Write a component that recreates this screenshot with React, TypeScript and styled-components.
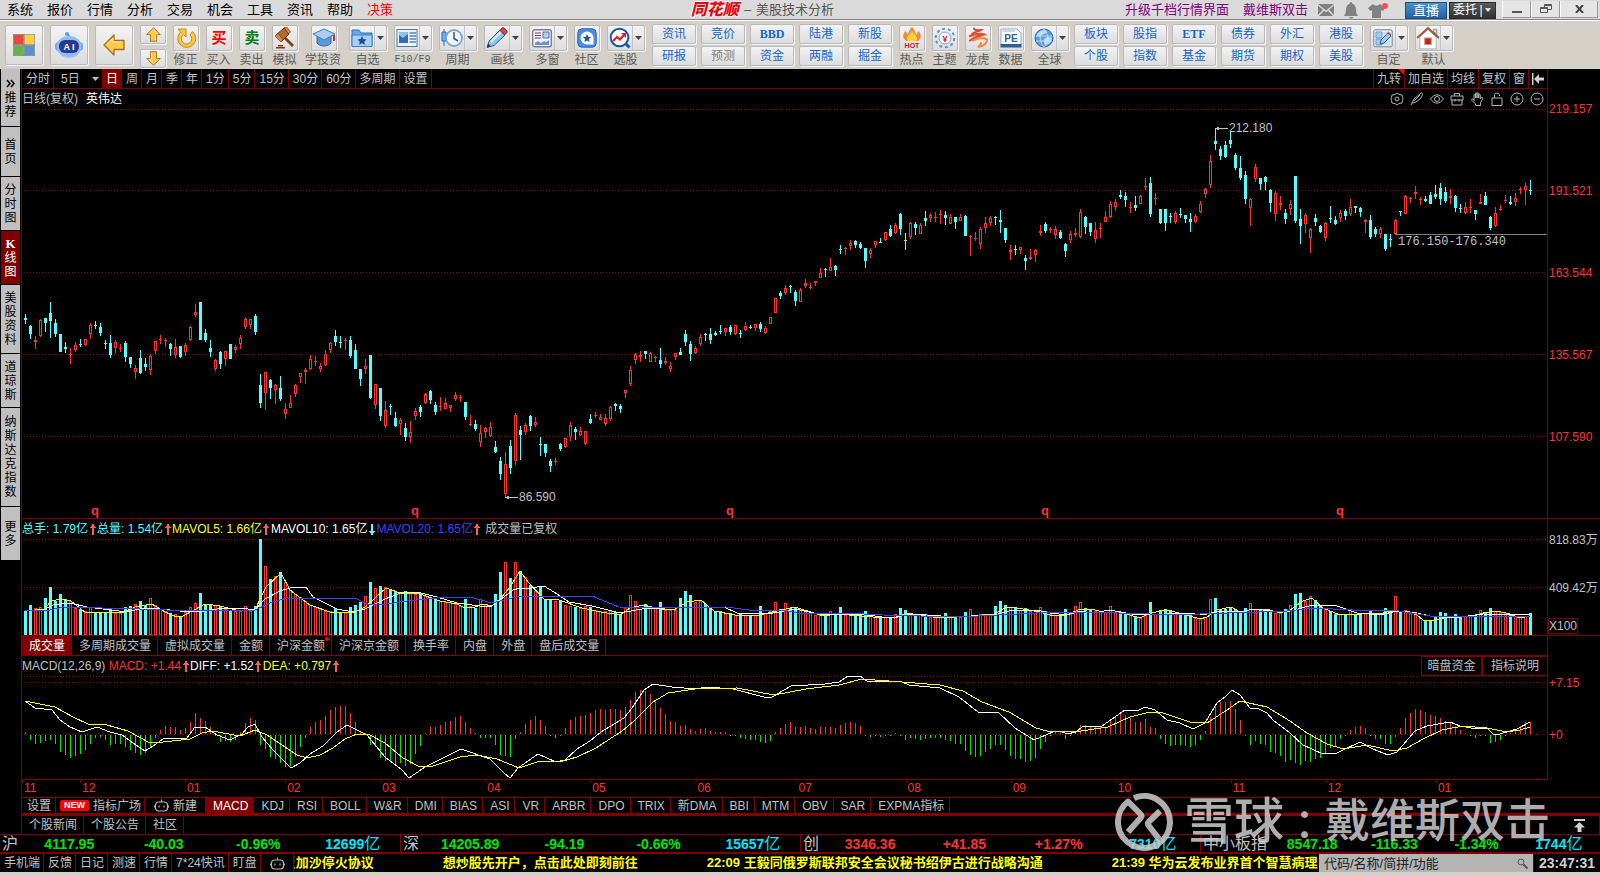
import React from "react";
import styled, { createGlobalStyle, css } from "styled-components";

/* ---------- palette ---------- */
const LINE = "#800000";
const RED = "#ff3232";
const CYAN = "#54ffff";
const SILVER = "#c0c0c0";
const YELLOW = "#ffff00";
const SANS = '"Liberation Sans", "Noto Sans CJK SC", sans-serif';

const GlobalStyle = createGlobalStyle`
  *, *::before, *::after { box-sizing: border-box; }
  body { margin: 0; background: #000; font: 12px/16px ${SANS}; color: ${SILVER}; }
  button, input { font: inherit; color: inherit; margin: 0; padding: 0; border: 0; background: none; border-radius: 0; }
  button { white-space: nowrap; cursor: pointer; }
  svg { display: block; flex: none; }
`;

/* ---------- market data ---------- */
/* One candle per token: direction, then high, body top, body bottom and low on the panel's own scale. */
const CANDLES = `
c314,318,320,324 c325,326,334,339 r336,340,342,349 r319,320,336,337 c318,318,323,332 c302,313,321,338 c319,323,334,337
c334,334,352,352 c342,347,349,353 r348,354,355,364 r342,345,350,352 c339,344,345,347 r339,339,345,346 r323,325,334,339
c321,325,326,329 c323,327,333,336 c340,343,344,349 c335,343,355,358 r340,342,348,353 r344,348,349,352 c341,343,357,362
c357,357,364,368 r365,368,372,379 c350,358,373,374 c358,364,367,371 r354,356,370,375 r341,341,351,354 r335,339,340,344
r338,340,341,347 c343,344,349,356 r339,347,355,358 c346,346,357,358 r343,345,352,356 r326,327,340,341 r304,312,315,317
c302,302,340,340 c329,333,340,342 c340,348,352,357 r359,360,369,371 c351,352,364,369 r351,351,359,366 c344,344,359,359
r345,347,350,353 r335,338,344,349 r317,319,327,329 r319,319,325,329 c314,316,332,335 c374,385,403,408 r372,372,393,410
c379,380,388,399 r384,385,390,404 c376,388,399,401 r403,409,414,419 r395,403,408,408 r384,385,394,397 r373,373,377,383
r368,370,372,384 r355,359,369,370 r356,361,362,366 r363,366,369,372 r350,354,365,366 r342,343,350,353 c330,336,342,346
c336,342,343,348 r338,340,341,350 c336,340,356,358 c344,350,369,369 c369,369,379,386 r359,366,369,374 c355,355,398,399
r384,384,405,409 c388,388,416,421 r401,410,426,428 c404,406,407,415 c412,418,426,427 r418,420,424,435 c423,428,437,441
r421,432,437,443 r408,411,416,420 c405,407,412,417 r393,394,403,404 c390,391,400,404 c402,405,412,415 r397,406,407,411
r398,403,409,409 r405,405,408,412 r392,395,399,401 r395,397,398,402 c402,402,417,420 r415,424,425,426 c420,424,429,431
r425,433,442,447 r427,428,432,438 r422,427,436,437 c441,447,452,453 c457,461,474,480 r452,464,494,497 c440,446,468,474
r413,415,461,465 c426,430,435,460 r423,425,432,435 c415,416,426,431 r417,422,425,427 c437,444,445,456 c444,444,453,457
c459,461,466,472 r458,461,462,465 c443,444,449,451 r438,438,447,448 r422,425,437,441 c427,429,432,440 r427,431,435,436
r431,431,444,445 c414,419,423,424 r412,415,416,418 r414,417,420,420 r414,418,424,426 r406,407,419,421 c403,404,406,411
c404,406,409,413 r390,390,393,398 r366,370,384,386 r353,354,360,364 r351,355,357,362 c351,351,354,359 r352,353,362,362
r356,357,358,362 c348,360,364,368 r357,361,363,365 r362,366,369,372 r353,353,357,360 c348,352,355,355 c330,334,342,346
c341,344,354,361 r346,348,353,354 r334,337,344,346 c333,334,335,341 c328,334,340,344 c331,333,335,336 c325,331,332,334
r328,328,332,336 c325,327,332,335 r325,325,334,335 c330,333,334,338 r322,326,330,331 c325,327,328,329 r324,324,328,331
c322,324,329,332 r326,328,333,334 r317,317,324,324 r298,298,313,313 c291,293,296,299 r285,288,293,295 c285,286,287,293
c290,292,301,306 r288,290,302,302 r279,283,286,288 r283,287,288,289 r281,281,283,286 r268,273,278,278 c268,269,270,277
r258,267,271,271 c265,266,270,276 c245,249,250,254 r247,248,249,255 r240,243,246,250 c240,241,245,248 c242,244,248,249
c248,248,261,268 r248,250,254,258 r241,241,245,248 c238,242,243,243 r232,232,240,241 c225,229,236,237 r223,225,233,234
c213,214,229,235 c233,240,241,250 r222,223,237,239 c222,224,228,235 r223,225,234,234 c211,218,221,226 r213,215,218,222
r212,217,218,222 r210,214,215,224 c211,215,218,225 r214,217,224,224 c217,217,222,229 r214,217,221,221 c215,216,236,236
r235,236,237,256 r232,238,239,241 r227,229,244,249 r217,223,228,233 r216,218,223,226 c216,217,218,225 c210,220,222,233
c228,228,240,243 r245,250,252,260 c245,249,250,255 r247,247,250,254 c255,258,261,270 r249,257,259,260 r249,250,255,262
r225,231,233,236 c222,224,231,233 r227,229,230,233 r226,229,235,239 c230,232,238,239 c243,244,251,257 r231,234,240,243
r228,233,235,237 r209,212,237,238 c216,217,227,234 c223,223,232,236 r222,230,239,243 r223,228,229,238 r211,217,222,222
r201,204,217,218 r199,202,207,211 c190,195,197,199 c192,196,200,207 r202,207,208,213 c196,205,208,211 r195,196,204,204
r178,186,187,190 c177,183,214,217 r193,198,199,205 c209,209,223,224 c209,209,223,231 c213,216,217,223 r211,213,222,224
c208,214,215,218 c215,215,219,223 c213,219,222,232 r214,216,222,223 r201,204,212,213 r188,189,194,198 r155,161,185,188
c129,141,144,150 c146,149,156,160 c141,145,157,158 c132,140,144,148 c153,155,168,170 c156,168,178,180 c171,175,199,204
r198,199,208,226 r164,167,179,182 c178,178,184,190 c176,177,182,190 c189,190,203,212 r191,193,214,221 r196,203,205,210
c209,213,219,224 r200,204,209,215 c176,176,221,223 c209,219,226,244 r213,215,224,233 r228,229,238,253 c214,218,222,226
c225,226,232,233 r222,223,238,241 c206,218,219,223 c216,220,224,225 r210,213,218,222 c209,211,216,220 r199,207,214,216
c206,206,208,213 c207,208,212,217 r219,220,222,233 c215,220,237,239 c227,229,234,237 r227,229,234,238 c234,234,249,251
c234,239,240,247 r219,220,234,235 c211,211,212,216 r195,196,214,214 r197,198,199,203 r186,192,194,199 r197,199,200,205
c196,199,201,202 c192,195,204,204 c185,194,197,199 c183,188,199,205 c187,192,201,203 r189,196,198,204 c195,196,208,212
c204,208,209,213 r202,207,213,214 r199,207,208,213 c210,210,214,220 r194,202,204,204 c192,196,205,205 c216,217,228,230
r207,213,226,227 r205,209,210,211 r195,200,201,203 c196,202,204,205 r193,198,202,206 r187,189,190,194 r183,186,190,205
c180,190,191,195`
  .trim()
  .split(/\s+/)
  .map((t) => {
    const [high, top, bottom, low] = t.slice(1).split(",").map(Number);
    return { up: t[0] === "r", high, top, bottom, low };
  });

const VOLUMES = [
  24, 30, 27, 28, 37, 48, 34, 41, 36, 34, 27, 26, 24, 28, 22, 23, 23, 26, 22, 22, 28, 29, 31, 34, 30, 37, 30, 26, 24, 22,
  21, 19, 23, 28, 32, 42, 31, 30, 30, 29, 26, 25, 24, 24, 29, 24, 29, 96, 69, 56, 59, 63, 53, 45, 41, 38, 34, 30, 28, 26,
  24, 24, 27, 23, 23, 28, 30, 33, 39, 53, 47, 49, 48, 46, 43, 42, 44, 42, 41, 42, 39, 37, 36, 34, 33, 33, 31, 29, 36, 29,
  27, 36, 31, 29, 41, 63, 73, 57, 73, 64, 58, 50, 44, 48, 36, 35, 34, 34, 30, 29, 28, 27, 29, 28, 25, 24, 24, 24, 23, 20,
  28, 40, 34, 26, 31, 28, 27, 33, 25, 25, 25, 37, 44, 40, 33, 34, 31, 27, 24, 24, 22, 22, 20, 21, 20, 20, 20, 29, 22, 24,
  33, 26, 32, 27, 28, 26, 24, 22, 20, 21, 21, 24, 20, 28, 20, 20, 20, 20, 24, 19, 18, 18, 18, 18, 21, 27, 25, 22, 21, 20,
  19, 18, 18, 18, 22, 18, 18, 18, 23, 26, 20, 21, 20, 20, 29, 34, 30, 28, 28, 25, 27, 24, 22, 28, 24, 21, 20, 20, 26, 21,
  29, 33, 27, 25, 24, 23, 23, 29, 23, 23, 21, 21, 18, 17, 22, 33, 21, 25, 26, 25, 22, 21, 21, 21, 17, 16, 18, 36, 37, 26,
  26, 28, 25, 23, 27, 32, 26, 25, 25, 25, 22, 22, 26, 30, 41, 42, 34, 39, 35, 29, 26, 24, 21, 21, 21, 25, 20, 20, 22, 25,
  21, 21, 27, 22, 39, 23, 25, 22, 21, 17, 15, 15, 18, 23, 22, 19, 21, 19, 19, 20, 20, 25, 23, 27, 24, 23, 22, 20, 19, 18,
  19, 22,
];

const MACD = [
  2, -5, -9, -8, -6, -5, -9, -17, -20, -23, -21, -19, -15, -9, -3, -2, -5, -10, -9, -9, -12, -15, -18, -20, -18, -12, -3,
  4, 8, 7, 7, 4, 6, 12, 21, 16, 13, 7, -1, -7, -6, -7, -5, 2, 11, 16, 14, -10, -14, -22, -24, -28, -32, -31, -22, -12, -3,
  7, 12, 14, 18, 24, 27, 28, 28, 21, 12, 3, 1, -10, -12, -23, -26, -27, -30, -28, -31, -29, -19, -11, 1, 7, 7, 9, 12, 13,
  17, 18, 12, 6, 1, -3, -3, -3, -10, -20, -21, -22, -4, 2, 10, 14, 18, 14, 8, -1, -3, -1, 6, 14, 17, 18, 19, 21, 24, 25,
  24, 25, 25, 24, 27, 34, 42, 44, 43, 40, 34, 26, 20, 13, 12, 8, 9, 5, 3, 5, 6, 3, 2, 2, 2, -1, -1, -3, -4, -5, -5, -7,
  -8, -6, 2, 6, 10, 12, 7, 7, 8, 6, 5, 7, 7, 7, 6, 9, 11, 12, 11, 8, -1, -2, -1, -2, -1, -1, 1, -1, -5, -3, -4, -5, -4,
  -3, -3, -3, -5, -6, -9, -9, -16, -20, -22, -21, -17, -14, -10, -10, -15, -21, -24, -24, -27, -26, -23, -14, -7, -1, 3,
  2, -4, -1, 2, 9, 9, 8, 7, 7, 7, 14, 17, 20, 19, 16, 12, 12, 15, 7, 6, -4, -9, -11, -10, -10, -11, -12, -10, -5, 3, 17,
  30, 32, 32, 33, 25, 14, -1, -10, -6, -9, -10, -17, -18, -21, -27, -25, -28, -30, -26, -27, -24, -23, -19, -13, -11, -4,
  -1, 4, 7, 8, 6, -1, -4, -4, -9, -9, -2, 6, 16, 21, 25, 24, 22, 19, 18, 16, 13, 11, 8, 4, 1, -1, -3, -1, -1, -8, -7, -5,
  -1, 1, 3, 8, 12, 12,
];

const MAVOL5 =
  "25,611 45,609 51,601 61,599 71,601 86,613 102,612 122,613 135,607 152,604 165,612 177,617 183,616 205,604 220,606 240,611 255,610 261,597 266,587 281,573 290,590 310,605 330,612 355,612 365,607 386,588 400,593 420,594 440,601 457,604 463,607 475,607 483,604 492,606 500,599 510,587 520,571 529,583 544,599 559,600 582,608 601,612 620,615 630,608 643,605 661,609 674,610 687,602 701,600 714,611 735,615 760,615 781,610 795,607 823,616 837,614 873,617 898,617 906,613 940,618 971,616 994,614 1007,607 1017,608 1040,612 1050,615 1065,616 1080,609 1095,610 1107,613 1120,612 1140,618 1150,613 1167,610 1183,614 1200,619 1207,617 1217,610 1231,607 1240,612 1253,609 1270,610 1280,613 1290,610 1303,601 1312,598 1323,608 1340,615 1350,614 1357,615 1368,613 1380,614 1387,612 1407,611 1417,615 1423,620 1430,621 1453,616 1470,617 1483,613 1497,611 1510,614 1520,618 1530,616";
const MAVOL10 =
  "25,610 43,610 53,605 70,603 87,607 103,609 127,612 143,608 160,609 180,611 197,612 217,609 240,608 255,610 265,599 280,591 290,588 306,587 313,597 337,609 353,612 365,609 385,599 403,592 417,592 437,597 457,603 480,606 492,606 500,600 513,590 520,588 531,588 544,586 554,592 569,602 592,606 620,613 642,609 665,608 691,607 724,607 737,613 768,614 795,609 818,614 867,615 890,618 913,614 955,617 994,615 1013,610 1036,610 1050,613 1067,615 1080,611 1093,613 1110,610 1137,615 1167,614 1187,613 1203,615 1220,611 1240,612 1253,609 1273,611 1290,611 1313,605 1337,606 1357,613 1380,615 1397,611 1417,613 1430,616 1453,618 1483,614 1530,615";
const MAVOL20 =
  "25,610 50,610 63,607 140,609 193,611 207,610 255,610 270,603 287,598 357,599 367,604 387,604 407,601 447,597 470,597 492,603 520,596 592,596 619,607 691,608 726,607 749,610 783,610 798,613 844,613 883,615 959,617 1036,613 1087,612 1150,614 1200,614 1287,611 1313,608 1353,610 1393,610 1430,616 1473,616 1530,616";
const DIFF =
  "25,701 35,708 52,710 60,720 70,727 82,732 97,727 110,732 122,735 133,743 145,751 153,746 163,739 187,738 195,727 205,727 217,735 230,740 242,734 248,727 255,724 262,737 273,750 291,768 300,763 310,754 323,746 337,732 347,725 357,730 367,735 385,757 402,770 409,778 425,767 439,760 461,749 490,759 504,773 510,778 518,768 538,754 556,762 565,760 577,749 590,741 601,732 624,718 632,708 644,690 653,684 672,687 695,689 707,687 733,689 764,697 772,697 791,686 825,684 839,682 848,676 860,676 867,681 902,682 909,685 940,688 959,697 978,712 999,713 1015,728 1034,740 1053,732 1060,731 1067,734 1076,732 1082,727 1102,726 1112,719 1125,710 1137,711 1145,707 1155,710 1167,720 1180,723 1193,729 1205,723 1217,703 1225,697 1232,690 1240,695 1250,708 1257,708 1267,713 1273,720 1290,733 1303,745 1323,754 1337,753 1360,742 1373,749 1388,755 1397,752 1415,731 1427,726 1450,722 1460,726 1477,729 1487,728 1493,734 1500,734 1517,729 1530,722";
const DEA =
  "25,701 55,707 73,717 88,724 107,725 128,731 150,743 163,742 190,739 202,733 212,731 240,736 255,730 267,735 282,745 297,755 307,758 320,755 333,748 345,739 357,734 370,735 385,743 403,758 420,767 433,766 460,757 477,755 497,759 519,768 540,761 563,761 577,757 596,748 622,731 634,721 653,702 668,693 695,689 737,688 774,695 806,689 839,685 862,679 902,682 940,685 963,691 982,702 1009,712 1036,728 1047,731 1074,732 1108,727 1130,717 1150,712 1163,713 1190,722 1207,723 1227,710 1240,701 1267,707 1290,721 1307,733 1327,744 1343,749 1367,745 1393,751 1407,748 1423,739 1442,730 1463,726 1487,728 1507,732 1520,730 1530,727";

const MONTHS: [number, string][] = [
  [22, "11"], [80, "12"], [185, "01"], [285, "02"], [380, "03"], [485, "04"], [590, "05"], [695, "06"],
  [796, "07"], [905, "08"], [1010, "09"], [1115, "10"], [1230, "11"], [1325, "12"], [1435, "01"],
];

/* ---------- menu bar ---------- */
const MenuBar = styled.header`
  display: flex; align-items: center; height: 21px; background: #dadada;
  border-bottom: 1px solid #fff; box-shadow: inset 0 -1px #8c8484; color: #000; font-size: 13px;
`;
const MenuItem = styled.button<{ $hot?: boolean }>`
  width: 40px; height: 18px; ${(p) => p.$hot && "color: #f00;"}
`;
const Spacer = styled.div` flex: 1; `;
const Title = styled.h1`
  display: flex; align-items: center; gap: 5px; margin: 0; font-size: 13px; font-weight: 400; color: #555;
`;
const Brand = styled.span`
  font: italic 900 16px/16px ${SANS}; color: #e00c12;
  text-shadow: 1px 0 #fff, -1px 0 #fff, 0 1px #fff, 0 -1px #fff;
`;
const TopLink = styled.a`
  color: #800080; text-decoration: none; margin-right: 14px; white-space: nowrap;
  &:last-of-type { margin-right: 10px; }
`;
const TopIcons = styled.div` display: flex; align-items: center; gap: 10px; margin-right: 16px; `;
const TopIcon = styled.button` display: block; `;
const LiveButton = styled.button`
  width: 42px; height: 17px; margin-right: 2px; color: #fff; line-height: 16px;
  background: linear-gradient(#4a90c8, #1f62a5); border: 1px solid #1a4f86;
`;
const EntrustButton = styled.button`
  display: flex; align-items: center; justify-content: space-between; width: 47px; height: 17px; padding: 0 4px 0 3px;
  margin-right: 6px; color: #fff; font-size: 12px; background: linear-gradient(#5a5a5a, #303030); border: 1px solid #2a2a2a;
`;
const WindowButton = styled.button`
  display: grid; place-items: center; width: 29px; height: 17px; background: #e4e4e4;
  border: 1px solid #9a9a9a; border-top: 0; border-left-color: #fff;
  &:last-child { width: 38px; }
`;
const WindowButtons = styled.div` display: flex; height: 19px; padding-right: 2px; `;

/* ---------- toolbar ---------- */
const ToolbarRow = styled.div`
  display: flex; align-items: flex-start; gap: 7px; height: 48px; padding: 4px 5px 0; background: #d4d0c8; color: #5a5a5a;
`;
const raised = css`
  border: 1px solid #b9b9bd; border-radius: 2px; box-shadow: 1px 1px #f4f4f4;
  background: linear-gradient(#f3f3f3, #dcdcdc);
`;
const BigButton = styled.button`
  ${raised} display: grid; place-items: center; width: 38px; height: 40px; flex: none;
`;
const ArrowStack = styled.div` display: flex; flex-direction: column; gap: 5px; `;
const SmallButton = styled.button`
  ${raised} display: grid; place-items: center; width: 26px; height: 19px;
`;
const ToolButton = styled.button<{ $wide?: boolean }>`
  display: flex; flex-direction: column; align-items: center; gap: 1px; flex: none;
  min-width: ${(p) => (p.$wide ? 38 : 26)}px;
`;
const IconFace = styled.span<{ $wide?: boolean }>`
  ${raised} display: flex; align-items: center; width: ${(p) => (p.$wide ? 38 : 26)}px; height: 26px;
`;
const IconSlot = styled.span<{ $tone?: string }>`
  display: grid; place-items: center; width: 24px; height: 24px;
  font: 700 15px/24px ${SANS}; color: ${(p) => p.$tone};
`;
const CaretSlot = styled.span`
  display: grid; place-items: center; width: 12px; height: 24px; border-left: 1px solid #c4c4c8;
`;
const ToolLabel = styled.span<{ $mono?: boolean }>`
  padding-right: 1px; line-height: 16px;
  ${(p) => p.$mono && 'font: 10px/16px "Liberation Mono", monospace;'}
`;
const QuickGrid = styled.div<{ $cols: number; $tight?: boolean }>`
  display: grid; grid-template-columns: repeat(${(p) => p.$cols}, 44px); gap: 2px 5px; flex: none;
  margin: -1px 0 0 ${(p) => (p.$tight ? -2 : 0)}px;
`;
const QuickButton = styled.button<{ $muted?: boolean; $latin?: boolean }>`
  ${raised} height: 20px; line-height: 18px; color: ${(p) => (p.$muted ? "#808080" : "#1565c8")};
  ${(p) => p.$latin && 'font: 700 12px/18px "Liberation Serif", serif;'}
`;

/* ---------- work area ---------- */
const WorkArea = styled.div` display: flex; align-items: flex-start; `;
const Sidebar = styled.nav`
  display: flex; flex-direction: column; gap: 1px; width: 21px; flex: none; padding-left: 1px;
`;
const SideTab = styled.button<{ $rows: number; $active?: boolean }>`
  display: flex; flex-direction: column; align-items: center; justify-content: center;
  width: 19px; height: ${(p) => p.$rows}px; line-height: 14px; white-space: normal;
  background: ${(p) => (p.$active ? LINE : SILVER)}; color: ${(p) => (p.$active ? "#fff" : "#000")};
`;
const SideGlyph = styled.span<{ $latin?: boolean }>`
  display: block; height: 14px; ${(p) => p.$latin && 'font: 700 13px/14px "Liberation Serif", serif;'}
`;
const Main = styled.main` flex: 1; min-width: 0; border-left: 1px solid ${LINE}; `;
const Row = styled.section<{ $ruled?: boolean }>`
  display: grid; grid-template-columns: minmax(0, 1fr) 52px;
  ${(p) => p.$ruled && `border-bottom: 1px solid ${LINE};`}
`;
const Pane = styled.div<{ $ruled?: boolean }>`
  border-right: 1px solid ${LINE}; ${(p) => p.$ruled && `border-bottom: 1px solid ${LINE};`}
`;
const Bar = styled.div<{ $h: number; $ruled?: boolean }>`
  display: flex; align-items: stretch; height: ${(p) => p.$h}px;
  ${(p) => p.$ruled && `border-bottom: 1px solid ${LINE};`}
`;
const Tab = styled.button<{ $active?: boolean; $pad?: number; $tight?: boolean }>`
  display: flex; align-items: center; gap: 4px; position: relative;
  padding: 0 ${(p) => (p.$pad ?? 7) - (p.$tight ? 2 : 1)}px 0 ${(p) => p.$pad ?? 7}px;
  border-right: 1px solid ${LINE}; color: ${(p) => (p.$active ? "#fff" : SILVER)};
  ${(p) => p.$active && `background: ${LINE};`}
`;
const PeriodMenu = styled(Tab)` width: 48px; justify-content: space-between; padding: 0 3px 0 7px; border-right: 0; `;
const Fold = styled.span`
  position: absolute; top: 0; right: 0; border: 3px solid; border-color: #f00 #f00 transparent transparent;
`;
const HotDot = styled.span`
  position: absolute; top: 1px; right: 2px; width: 4px; height: 4px; border-radius: 2px; background: #f00;
`;
const RightTabs = styled.div`
  display: flex; margin-left: auto; border-left: 1px solid ${LINE};
  & > button { padding: 0 3px; }
  & > button:last-child { border-right: 0; }
`;
const Heading = styled.h2`
  display: flex; gap: 8px; margin: 0; font-size: 12px; font-weight: 400; line-height: 20px;
`;
const StockName = styled.span` color: #fff; `;
const ChartTools = styled.div` display: flex; align-items: center; gap: 4px; margin-left: auto; padding-right: 2px; `;
const ChartTool = styled.button` display: grid; place-items: center; width: 16px; height: 16px; `;
const Readout = styled.span<{ $tone: string }>`
  color: ${(p) => p.$tone}; line-height: 20px; white-space: pre;
`;
const ArrowCell = styled.span` display: grid; place-items: center; width: 9px; height: 20px; `;
const BoxButton = styled.button<{ $w: number }>`
  width: ${(p) => p.$w}px; border: 1px solid ${LINE}; border-right: 0;
  & + & { border-left-width: 2px; }
`;
const BoxButtons = styled.div` display: flex; margin-left: auto; `;
const Plot = styled.svg<{ $h: number }>` width: 100%; height: ${(p) => p.$h}px; `;
const Scale = styled.div<{ $pitch: number; $top: number; $tone?: string }>`
  display: flex; flex-direction: column; padding: ${(p) => p.$top}px 0 0 1px; color: ${(p) => p.$tone ?? RED};
  white-space: nowrap; overflow: hidden;
  & > span { flex: none; height: ${(p) => p.$pitch}px; line-height: 20px; }
`;
const UnitBox = styled.em`
  width: 30px; height: 16px; margin: -8px 0 0 -1px; border: 1px solid ${LINE}; font-style: normal; line-height: 14px;
`;
const NewTag = styled.strong`
  padding: 0 4px; height: 11px; border-radius: 2px; background: #f00; color: #fff; font-size: 9px; line-height: 11px;
`;

/* ---------- footer ---------- */
const IndicatorBar = styled.div`
  display: flex; height: 19px; border-top: 1px solid ${LINE}; border-bottom: 3px solid ${LINE};
`;
const NewsBar = styled.div`
  display: flex; height: 18px; border-right: 1px solid ${LINE};
`;
const TopButton = styled.button` display: grid; place-items: center; width: 40px; margin-left: auto; `;
const IndexBar = styled.div`
  display: grid; grid-template-columns: repeat(4, 1fr); height: 20px;
  border-top: 1px solid ${LINE}; border-bottom: 2px solid ${LINE};
`;
const IndexGroup = styled.div`
  display: flex; align-items: center; min-width: 0; padding-left: 2px;
  & + & { border-left: 1px solid ${LINE}; }
`;
const IndexName = styled.span` padding-right: 4px; font-size: 16px; `;
const IndexValue = styled.span<{ $tone: string }>`
  flex: 1; text-align: center; font-size: 14px; font-weight: 700; color: ${(p) => p.$tone}; white-space: nowrap;
`;
const Unit = styled.span` font-size: 16px; font-weight: 400; `;
const StatusBar = styled.footer`
  display: flex; height: 21px; border-bottom: 3px solid #d4d0c8;
`;
const Ticker = styled.div`
  flex: 1; min-width: 0; display: flex; gap: 69px; overflow: hidden;
  color: ${YELLOW}; font-size: 13px; font-weight: 700; line-height: 17px; white-space: nowrap;
`;
const TickerItem = styled.a`
  color: inherit; text-decoration: none; flex: none;
  &:first-child { margin-left: -11px; }
`;
const Search = styled.label`
  display: flex; align-items: center; width: 214px; flex: none; padding: 0 5px; background: #b4b4b4; color: #333;
`;
const SearchInput = styled.input`
  flex: 1; min-width: 0; height: 18px; font-size: 13px; color: #000; outline: 0;
  &::placeholder { color: #222; opacity: 1; }
`;
const Clock = styled.time`
  width: 67px; flex: none; border-left: 1px solid ${LINE}; text-align: center; font-size: 14px; font-weight: 700; line-height: 18px; color: #d0d0d0;
`;

/* ---------- watermark ---------- */
const Watermark = styled.div`
  position: absolute; right: 50px; bottom: 22px; display: flex; align-items: center; height: 62px;
  color: rgba(205, 205, 205, 0.85); font-size: 45px; font-weight: 500; line-height: 60px; pointer-events: none; white-space: nowrap;
`;
const MarkBrand = styled.span` font-size: 50px; padding-left: 11px; `;
const MarkColon = styled.span` width: 41px; font-family: "Noto Sans CJK JP", sans-serif; font-size: 41px; `;
const Page = styled.div` position: relative; min-width: 1200px; background: #000; `;

/* ---------- icons ---------- */
const Caret = ({ color = "#444", w = 7 }: { color?: string; w?: number }) => (
  <svg width={w} height="4" viewBox="0 0 7 4"><path d="M0 0h7L3.5 4z" fill={color} /></svg>
);
const Trend = ({ down }: { down?: boolean }) => (
  <ArrowCell>
    <svg width="6" height="11" viewBox="0 0 6 11" shapeRendering="crispEdges" fill={down ? CYAN : "#ff5a5a"}>
      {down ? <path d="M2 0h2v7h2v1H5v1H4v2H2V9H1V8H0V7h2z" /> : <path d="M2 0h2v2h1v1h1v1H4v7H2V4H0V3h1V2h1z" />}
    </svg>
  </ArrowCell>
);
const Robot = () => (
  <svg width="15" height="13" viewBox="0 0 15 13" fill="none" stroke="#b4b4b4" strokeWidth="1.2">
    <path d="M4.5 3h6a3 3 0 0 1 3 3v3a3 3 0 0 1-3 3h-6a3 3 0 0 1-3-3V6a3 3 0 0 1 3-3zM7.5 3V.5M5 6.5v2M10 6.5v2M.6 6.5v2M14.4 6.5v2" />
  </svg>
);
const Windows = () => (
  <svg width="22" height="22" viewBox="0 0 22 22">
    <rect width="10" height="10" x=".5" y=".5" fill="#e24a3b" /><rect width="10" height="10" x="11.5" y=".5" fill="#f9cf3f" />
    <rect width="10" height="10" x=".5" y="11.5" fill="#6bb14b" /><rect width="10" height="10" x="11.5" y="11.5" fill="#5b8fc9" />
    <path d="M0 0h22v22H0zM11 0v22M0 11h22" fill="none" stroke="#6b6f78" />
  </svg>
);
const AiFace = () => (
  <svg width="30" height="28" viewBox="0 0 30 28">
    <ellipse cx="15" cy="23" rx="9" ry="4" fill="#a9c6f5" />
    <rect x="1" y="11" width="28" height="9" rx="4" fill="#6f9bea" />
    <circle cx="13" cy="3" r="2" fill="#5da0ee" /><path d="m13 3 3 3" stroke="#5da0ee" strokeWidth="2" />
    <ellipse cx="15" cy="15.5" rx="12.5" ry="10.5" fill="#8fbbf7" />
    <rect x="5" y="9" width="20" height="13" rx="6" fill="#273a8c" />
    <text x="15" y="18.5" textAnchor="middle" fontSize="9" fontWeight="700" fontFamily="Liberation Sans, sans-serif" fill="#fff">A I</text>
  </svg>
);
const GoldArrow = ({ turn, size }: { turn: number; size: number }) => (
  <svg width={size} height={size} viewBox="0 0 22 22">
    <path d="M1 11 11 1v5.5h10v9H11V21z" fill="#fcc94a" stroke="#a86b1c" strokeWidth="1.3" strokeLinejoin="round" transform={`rotate(${turn} 11 11)`} />
    <path d="M4 10.5 10 4.5v3.5h9" fill="none" stroke="#ffefb0" transform={`rotate(${turn} 11 11)`} />
  </svg>
);
const icons: Record<string, React.ReactNode> = {
  fix: (
    <svg width="22" height="22" viewBox="0 0 22 22"><path d="M3 2h8v8L8.6 7.6A5.2 5.2 0 1 0 15 8l2.500-3.500A9 9 0 1 1 5.500 5z" fill="#fcc63c" stroke="#c98a20" strokeLinejoin="round" /></svg>
  ),
  gavel: (
    <svg width="22" height="22" viewBox="0 0 22 22">
      <path d="m12 10 8 8-2 2-8-8z" fill="#7a4320" /><path d="m2 8 8-7 5 6-7 7z" fill="#b4682f" stroke="#6b3512" />
      <path d="m1 9 3-2.5 5 6L7 15zM10 0l2.500-.5 4 5.500-2 2z" fill="#d68d4a" stroke="#6b3512" strokeWidth=".7" /><path d="M2 20h9v1.500H2zM4 18h5v1.500H4z" fill="#8d2f14" />
    </svg>
  ),
  cap: (
    <svg width="24" height="20" viewBox="0 0 24 20">
      <path d="M5 8v7c3 4 11 4 14 0V8z" fill="#5a98d8" stroke="#2d68ad" /><path d="M1 6 12 1l11 5-11 6z" fill="#a9cff5" stroke="#3f7fc2" /><path d="M22 7v6" stroke="#cf2f2f" strokeWidth="2" />
    </svg>
  ),
  folder: (
    <svg width="22" height="20" viewBox="0 0 22 20">
      <path d="M1 2h7l2 3h11v13H1z" fill="#6aa7e6" stroke="#2f6fb4" /><path d="M1 7h20v11.500H1z" fill="#a7d0f6" stroke="#3c7dc2" />
      <path d="m11 8 1.400 3 3.200.4-2.300 2.200.6 3.200L11 15.200l-2.900 1.600.6-3.200-2.300-2.200 3.200-.4z" fill="#1e4f92" />
    </svg>
  ),
  page: (
    <svg width="22" height="20" viewBox="0 0 22 20"><rect x="1" y="1.500" width="20" height="17" fill="#eaf2fb" stroke="#54789f" /><rect x="3" y="4" width="9" height="11" fill="#8cc0f2" /><path d="m3 7 4 3 5-4v9H3z" fill="#2f6db5" /><path d="M13.500 5H20M13.500 8H20M13.500 11H20M13.500 14H20" stroke="#5682b6" strokeWidth="1.500" /></svg>
  ),
  clock: (
    <svg width="22" height="22" viewBox="0 0 22 22"><path d="M3 2v17" stroke="#2b6cb8" /><path d="M1 5h4v9H1z" fill="#6fb0ee" stroke="#2b6cb8" /><circle cx="13" cy="11" r="8" fill="#f4f8fc" stroke="#7ba6d0" strokeWidth="1.800" /><path d="M13 5v6.500l4 2.500" fill="none" stroke="#24598f" strokeWidth="1.500" /></svg>
  ),
  pencil: (
    <svg width="22" height="22" viewBox="0 0 22 22"><path d="M1 20.500 3 14 14 3l5 5L8 18.500z" fill="#8fc4f3" stroke="#2c649f" /><path d="m5 15 11-11" stroke="#d8eefd" strokeWidth="2" /><path d="m14 3.500 2-2.500a2 2 0 0 1 2 0l3 3a2 2 0 0 1 0 1.500L18.500 8z" fill="#d24a42" stroke="#7a2722" /><path d="m1 20.500 1.200-4 2.600 2.800z" fill="#333" /></svg>
  ),
  panes: (
    <svg width="20" height="20" viewBox="0 0 20 20"><rect x=".7" y="1.700" width="18.600" height="17" rx="2" fill="#f0f4fa" stroke="#7a7f94" strokeWidth="1.400" /><path d="M3 5h6M3 7.500h6M3 10h6" stroke="#8a3a86" strokeWidth="1.200" /><path d="M11 4h6v6h-6z" fill="#b6cdec" stroke="#4f78b8" /><path d="m3 15 3-2 3 2 3-2 2 1 3-2v5H3z" fill="#6b93cf" /></svg>
  ),
  badge: (
    <svg width="20" height="20" viewBox="0 0 20 20"><rect x=".8" y=".8" width="18.400" height="18.400" rx="4" fill="#4a8de0" stroke="#2a64b4" /><path d="M10 3.500a6.500 6.500 0 0 1 6.500 6.500v6.500H10a6.500 6.500 0 0 1 0-13z" fill="#fff" /><path d="m10 6 1.200 2.700 3 .3-2.200 2 .6 2.900-2.600-1.500-2.600 1.500.6-2.900-2.200-2 3-.3z" fill="#1f56a8" /></svg>
  ),
  magnify: (
    <svg width="22" height="22" viewBox="0 0 22 22"><circle cx="10.500" cy="10.500" r="8.800" fill="#fff" stroke="#1f56a8" strokeWidth="2" /><path d="m16.500 16.500 4 4" stroke="#1f56a8" strokeWidth="3" /><path d="m4 14 4-4 3 2.500 4.500-5" fill="none" stroke="#d4242c" strokeWidth="2.200" /><path d="M12 6h5v5z" fill="#d4242c" /></svg>
  ),
  fire: (
    <svg width="20" height="22" viewBox="0 0 20 22">
      <path d="M4 14C-1 9 2 7 3 4c2 1 2 3 2.500 4C7 5 7 3 10 0c3 3 3 5 4.500 8 .5-1 .500-3 2.500-4 1 3 4 5-1 10z" fill="#f08a3c" /><path d="M6 14c-3-4 1-5 4-10 3 5 7 6 4 10z" fill="#ffd23c" />
      <text x="10" y="21" textAnchor="middle" fontSize="7" fontWeight="700" fontFamily="Liberation Sans, sans-serif" fill="#c8161c">HOT</text>
    </svg>
  ),
  theme: (
    <svg width="22" height="22" viewBox="0 0 22 22"><circle cx="11" cy="11" r="9.300" fill="none" stroke="#5d94cf" strokeWidth="2" strokeDasharray="3 2.800" /><circle cx="11" cy="11" r="6" fill="#fff" stroke="#7ba6d6" /><text x="11" y="14.500" textAnchor="middle" fontSize="9" fontWeight="700" fontFamily="Liberation Sans, sans-serif" fill="#e0161c">¥</text></svg>
  ),
  dragon: (
    <svg width="22" height="22" viewBox="0 0 22 22" fill="none" strokeLinecap="round"><path d="M7 1.500c1 3 4 1.500 7 1.500-2 1.500-6 1.500-9 4" stroke="#d8452c" strokeWidth="2" /><path d="M3 9c4-1.500 9-3 14-1.500-4 1.500-9 2-14 6" stroke="#e24d2d" strokeWidth="2.200" /><path d="M6 13.500c4-2 10-3 14-1 .5 3-3 7-9 7.500 2-1 3-2.500 3-4" stroke="#f08a4a" strokeWidth="2.200" /></svg>
  ),
  pe: (
    <svg width="22" height="20" viewBox="0 0 22 20"><path d="M1 1h16l4 4v12H1z" fill="#fff" stroke="#8fa9c8" /><path d="M.500 16h21v3.500h-21z" fill="#305f93" /><path d="M3 3h12" stroke="#8fb2d6" /><text x="11" y="14" textAnchor="middle" fontSize="10" fontWeight="700" fontFamily="Liberation Sans, sans-serif" fill="#345f90">PE</text></svg>
  ),
  globe: (
    <svg width="20" height="20" viewBox="0 0 20 20"><circle cx="10" cy="10" r="9" fill="#5c9ee0" stroke="#2a64a6" /><path d="M3 6c3-4 8-5 10-2-2 3-6 2-7 5-2 0-3-1-3-3zM10 11c3-3 6-2 8-1-1 5-4 7-7 7-1-2-2-4-1-6z" fill="#b4dafa" /><path d="M1.500 8h17M2 13h16M10 1c-5 5-5 13 0 18M10 1c5 5 5 13 0 18" fill="none" stroke="#d6ecff" strokeWidth=".7" /></svg>
  ),
  custom: (
    <svg width="20" height="20" viewBox="0 0 20 20"><rect x=".8" y="1.800" width="18.400" height="17" rx="1.500" fill="#e6eefa" stroke="#7a7f94" /><path d="M3 4h6v6H3zM3 11h6v6H3z" fill="#a6ccf4" stroke="#6d9cd0" /><path d="M10.500 4H17v6h-6.500zM10.500 11H17v6h-6.500z" fill="#c9def6" /><path d="m7 16 1-4 7-7 3 3-7 7z" fill="#9cc8f2" stroke="#2b5a94" /><path d="m14.500 4.500 1-1 3 3-1 1z" fill="#d2564a" /></svg>
  ),
  home: (
    <svg width="24" height="24" viewBox="0 0 22 22"><path d="M3.500 10v11h15V10L11 3z" fill="#fff" stroke="#bbb" /><path d="M16 3h3v5l-3-3z" fill="#ddd" stroke="#999" /><path d="M1 11 11 2l10 9" fill="none" stroke="#9a5a42" strokeWidth="1.800" /><path d="M8 11h6v6H8z" fill="#b8281e" stroke="#dc8c80" /></svg>
  ),
};

const toolIcons: [string, React.ReactNode][] = [
  ["图表设置", <><path d="m7 1 2 1.500 3 .5.500 2.500L13 7l-.5 1.500L12 11l-3 .5L7 13l-2-1.500L2 11l-.5-2.500L1 7l.5-1.500L2 3l3-.5z" /><circle cx="7" cy="7" r="2" /></>],
  ["画笔", <path d="M1 13 4 7l7-6c3-1 1 4-1 6l-4 3-4 1M4 9l6-6" />],
  ["显示", <><path d="M.500 7c4-5.500 9-5.500 13 0-4 5.500-9 5.500-13 0z" /><circle cx="7" cy="7" r="2.500" /></>],
  ["工具箱", <path d="M1 4h12v4H1zM2 8v5h10V8M4.500 4V1.500h5V4M5 7v2.500M9 7v2.500" />],
  ["拖动", <path d="M4 8V3c0-1 1.500-1 1.500 0v3M5.500 6V1.500c0-1 1.500-1 1.500 0V6M7 6V1.500c0-1 1.700-1 1.700 0V6M8.700 6V3c0-1 1.600-1 1.600 0v4l1-1.500c1-.8 1.700 0 1.400 1L10.500 11v2.500h-5V12L2 8.500c-1-1 0-2 1-1.500l1.500 2" />],
  ["解锁", <path d="M2 6h10v7.500H2zM4.500 6V3c0-2.500 5-2.500 5 0v1" />],
  ["放大", <><circle cx="7" cy="7" r="6" /><path d="M7 4v6M4 7h6" /></>],
  ["缩小", <><circle cx="7" cy="7" r="6" /><path d="M4 7h6" /></>],
];

/* ---------- building blocks ---------- */
interface ToolProps { label: string; icon?: string; glyph?: string; tone?: string; menu?: boolean; mono?: boolean }
const Tool = ({ label, icon, glyph, tone, menu, mono }: ToolProps) => (
  <ToolButton $wide={menu}>
    <IconFace $wide={menu}>
      <IconSlot $tone={tone}>{icon ? icons[icon] : glyph}</IconSlot>
      {menu && <CaretSlot><Caret /></CaretSlot>}
    </IconFace>
    <ToolLabel $mono={mono}>{label}</ToolLabel>
  </ToolButton>
);
const Quick = ({ items, tight }: { items: string[]; tight?: boolean }) => (
  <QuickGrid $cols={items.length / 2} $tight={tight}>
    {items.map((t) => <QuickButton key={t} $muted={t === "预测"} $latin={/^[A-Z]+$/.test(t)}>{t}</QuickButton>)}
  </QuickGrid>
);
const GridLines = ({ ys }: { ys: number[] }) => (
  <g stroke={LINE} strokeDasharray="1 2">
    {ys.map((y) => <line key={y} x1="24" x2="1547" y1={y + 0.5} y2={y + 0.5} />)}
  </g>
);
const xAt = (i: number) => 25 + 5 * i;
const Body = ({ x, top, bottom, up }: { x: number; top: number; bottom: number; up: boolean }) => (
  <>
    <rect x={x - 1} y={top} width="3" height={bottom - top} fill={up ? RED : CYAN} />
    {up && bottom - top > 2 && <rect x={x} y={top + 1} width="1" height={bottom - top - 2} fill="#000" />}
  </>
);

const PriceChart = () => (
  <Plot $h={409} viewBox="22 109 1525 409" preserveAspectRatio="none" shapeRendering="crispEdges">
    <GridLines ys={[109, 190, 272, 354, 436]} />
    {CANDLES.map((c, i) => (
      <g key={i}>
        <rect x={xAt(i)} y={c.high} width="1" height={c.low - c.high} fill={c.up ? RED : CYAN} />
        <Body x={xAt(i)} top={c.top} bottom={c.bottom} up={c.up} />
      </g>
    ))}
    <path d="M1395 234.500h152" stroke="#808080" />
    <path d="M1215 128.500h13M505 497.500h13" stroke={SILVER} />
    <path d="m1215 128.500 4-2v4zM505 497.500l4-2v4z" fill={SILVER} />
    <g fontSize="12" fill={SILVER} fontFamily="Liberation Sans, sans-serif">
      <text x="1229" y="132">212.180</text>
      <text x="519" y="501">86.590</text>
      <text x="1398" y="245" fontFamily="Liberation Mono, monospace">176.150-176.340</text>
    </g>
    <g fontSize="13" fontWeight="700" fill={RED} textAnchor="middle" fontFamily="Liberation Sans, sans-serif">
      {[95, 415, 730, 1045, 1340].map((x) => <text key={x} x={x} y="515">q</text>)}
    </g>
  </Plot>
);

const VolumeChart = () => (
  <Plot $h={96} viewBox="22 539 1525 96" preserveAspectRatio="none" shapeRendering="crispEdges">
    <GridLines ys={[539, 587]} />
    {VOLUMES.map((v, i) => <Body key={i} x={xAt(i)} top={635 - v} bottom={635} up={CANDLES[i].up} />)}
    <g fill="none" strokeWidth="1">
      <polyline points={MAVOL5} stroke={YELLOW} />
      <polyline points={MAVOL10} stroke="#fff" />
      <polyline points={MAVOL20} stroke="#4040ff" />
    </g>
  </Plot>
);

const MacdChart = () => (
  <Plot $h={103} viewBox="22 676 1525 103" preserveAspectRatio="none" shapeRendering="crispEdges">
    <GridLines ys={[676, 682, 734]} />
    {MACD.map((v, i) => (
      <rect key={i} x={xAt(i)} y={v > 0 ? 734 - v : 735} width="1" height={Math.abs(v)} fill={v > 0 ? RED : "#00e600"} />
    ))}
    <g fill="none" strokeWidth="1">
      <polyline points={DIFF} stroke="#fff" />
      <polyline points={DEA} stroke={YELLOW} />
    </g>
  </Plot>
);

const MonthAxis = () => (
  <Plot $h={17} viewBox="22 780 1525 17" preserveAspectRatio="none">
    <g fontSize="12" fill={RED} fontFamily="Liberation Sans, sans-serif">
      {MONTHS.map(([x, m]) => (
        <React.Fragment key={x}>
          <rect x={x} y="780" width="1" height="3" fill={LINE} />
          <text x={x + 2} y="792">{m}</text>
        </React.Fragment>
      ))}
    </g>
  </Plot>
);

const sideTabs: [string, number][] = [
  ["推荐", 57], ["首页", 49], ["分时图", 53], ["K线图", 53], ["美股资料", 68], ["道琼斯", 53], ["纳斯达克指数", 98], ["更多", 53],
];
const GREEN = "#00e600";
const indices = [
  { name: "沪", values: ["4117.95", "-40.03", "-0.96%"], amount: "12699", tone: GREEN },
  { name: "深", values: ["14205.89", "-94.19", "-0.66%"], amount: "15657", tone: GREEN },
  { name: "创", values: ["3346.36", "+41.85", "+1.27%"], amount: "7310", tone: RED },
  { name: "中小板指", values: ["8547.18", "-116.33", "-1.34%"], amount: "1744", tone: GREEN },
];

export default function App() {
  return (
    <Page>
      <GlobalStyle />
      <MenuBar>
        {["系统", "报价", "行情", "分析", "交易", "机会", "工具", "资讯", "帮助", "决策"].map((m) => (
          <MenuItem key={m} $hot={m === "决策"}>{m}</MenuItem>
        ))}
        <Spacer />
        <Title><Brand>同花顺</Brand><span>–</span><span>美股技术分析</span></Title>
        <Spacer />
        <TopLink href="#upgrade">升级千档行情界面</TopLink>
        <TopLink href="#user">戴维斯双击</TopLink>
        <TopIcons>
          <TopIcon aria-label="消息">
            <svg width="16" height="12" viewBox="0 0 16 12" fill="#808080"><path d="M0 0h16L8 6.500zM0 1.500l5 4.300L0 11zM16 1.500l-5 4.300 5 5.200zM6 6.700l2 1.600 2-1.600 5 5.300H1z" /></svg>
          </TopIcon>
          <TopIcon aria-label="提醒">
            <svg width="14" height="17" viewBox="0 0 14 17" fill="#808080"><path d="M7 0c1 0 1.300 1 1.300 1.800C11 2.500 12 5 12 8s1 4 2 6H0c1-2 2-3 2-6s1-5.500 3.700-6.200C5.700 1 6 0 7 0zM5 15h4c0 2-4 2-4 0z" /></svg>
          </TopIcon>
          <TopIcon aria-label="皮肤">
            <svg width="21" height="16" viewBox="0 0 21 16" fill="#808080"><path d="M5 2c2 2 5 2 7 0l5 4-2 3-2-1v8H4V8L2 9 0 6z" /><circle cx="17" cy="4" r="3" fill="#ff4d4d" /></svg>
          </TopIcon>
        </TopIcons>
        <LiveButton>直播</LiveButton>
        <EntrustButton>委托<span>|</span><Caret color="#fff" w={6} /></EntrustButton>
        <WindowButtons>
          <WindowButton aria-label="最小化"><svg width="10" height="8"><path d="M0 6h10v2H0z" fill="#555" /></svg></WindowButton>
          <WindowButton aria-label="还原"><svg width="12" height="9" viewBox="0 0 12 9" fill="none" stroke="#555"><path d="M4.500 3V.5h7v5H8M.5 3.500h7v5H.5zM.5 4.500h7M4.500 1.500h7" /></svg></WindowButton>
          <WindowButton aria-label="关闭"><svg width="9" height="8" viewBox="0 0 9 8"><path d="m1 0 7 8M8 0 1 8" stroke="#444" strokeWidth="2" /></svg></WindowButton>
        </WindowButtons>
      </MenuBar>

      <ToolbarRow>
        <BigButton aria-label="首页"><Windows /></BigButton>
        <BigButton aria-label="AI 助手"><AiFace /></BigButton>
        <BigButton aria-label="后退"><GoldArrow turn={0} size={22} /></BigButton>
        <ArrowStack>
          <SmallButton aria-label="上一个"><GoldArrow turn={90} size={15} /></SmallButton>
          <SmallButton aria-label="下一个"><GoldArrow turn={270} size={15} /></SmallButton>
        </ArrowStack>
        <Tool label="修正" icon="fix" />
        <Tool label="买入" glyph="买" tone="#f00" />
        <Tool label="卖出" glyph="卖" tone="#00801c" />
        <Tool label="模拟" icon="gavel" />
        <Tool label="学投资" icon="cap" />
        <Tool label="自选" icon="folder" menu />
        <Tool label="F10/F9" icon="page" menu mono />
        <Tool label="周期" icon="clock" menu />
        <Tool label="画线" icon="pencil" menu />
        <Tool label="多窗" icon="panes" menu />
        <Tool label="社区" icon="badge" />
        <Tool label="选股" icon="magnify" menu />
        <Quick items={["资讯", "竞价", "BBD", "陆港", "新股", "研报", "预测", "资金", "两融", "掘金"]} />
        <Tool label="热点" icon="fire" />
        <Tool label="主题" icon="theme" />
        <Tool label="龙虎" icon="dragon" />
        <Tool label="数据" icon="pe" />
        <Tool label="全球" icon="globe" menu />
        <Quick tight items={["板块", "股指", "ETF", "债券", "外汇", "港股", "个股", "指数", "基金", "期货", "期权", "美股"]} />
        <Tool label="自定" icon="custom" menu />
        <Tool label="默认" icon="home" menu />
      </ToolbarRow>

      <WorkArea>
        <Sidebar>
          {sideTabs.map(([name, h], i) => (
            <SideTab key={name} $rows={h} $active={name === "K线图"}>
              {i === 0 && (
                <svg width="9" height="14" viewBox="0 0 9 14" fill="none" stroke="#000" strokeWidth="1.500"><path d="m1 3 3 3.500L1 10M5 3l3 3.500L5 10" /></svg>
              )}
              {[...name].map((ch) => <SideGlyph key={ch} $latin={ch === "K"}>{ch}</SideGlyph>)}
            </SideTab>
          ))}
        </Sidebar>

        <Main>
          <Row>
            <Pane $ruled>
              <Bar $h={19}>
                <Tab $pad={4}>分时</Tab>
                <PeriodMenu aria-haspopup="menu">5日<Caret color={SILVER} /></PeriodMenu>
                {["日", "周", "月", "季", "年", "1分", "5分", "15分", "30分", "60分", "多周期", "设置"].map((t) => (
                  <Tab key={t} $pad={4} $active={t === "日"}>{t}</Tab>
                ))}
                <RightTabs>
                  <Tab>九转<Fold /></Tab>
                  {["加自选", "均线", "复权", "窗"].map((t) => <Tab key={t}>{t}</Tab>)}
                  <Tab aria-label="收起">
                    <svg width="12" height="12" viewBox="0 0 12 12" fill="#d0d0d0"><path d="M0 0h1.500v12H0zM2 6l5-5v3.500h5v3H7V11z" /></svg>
                  </Tab>
                </RightTabs>
              </Bar>
            </Pane>
          </Row>

          <Row $ruled>
            <Pane>
              <Bar $h={20}>
                <Heading>日线(复权)<StockName>英伟达</StockName></Heading>
                <ChartTools>
                  {toolIcons.map(([name, shape]) => (
                    <ChartTool key={name} aria-label={name}>
                      <svg width="14" height="14" viewBox="0 0 14 14" fill="none" stroke="#b4b4b4">{shape}</svg>
                    </ChartTool>
                  ))}
                </ChartTools>
              </Bar>
              <PriceChart />
            </Pane>
            <Scale $pitch={82} $top={10}>
              {["219.157", "191.521", "163.544", "135.567", "107.590"].map((v) => <span key={v}>{v}</span>)}
            </Scale>
          </Row>

          <Row $ruled>
            <Pane>
              <Bar $h={20}>
                <Readout $tone={CYAN}>总手: 1.79亿</Readout><Trend />
                <Readout $tone={CYAN}>总量: 1.54亿</Readout><Trend />
                <Readout $tone={YELLOW}>MAVOL5: 1.66亿</Readout><Trend />
                <Readout $tone="#fff">MAVOL10: 1.65亿</Readout><Trend down />
                <Readout $tone="#4040ff">MAVOL20: 1.65亿</Readout><Trend />
                <Readout $tone={SILVER}> 成交量已复权</Readout>
              </Bar>
              <VolumeChart />
            </Pane>
            <Scale $pitch={48} $top={11} $tone={SILVER}>
              <span>818.83万</span><span>409.42万</span><UnitBox>X100</UnitBox>
            </Scale>
          </Row>

          <Row>
            <Pane $ruled>
              <Bar $h={20} $ruled>
                {["成交量", "多周期成交量", "虚拟成交量", "金额", "沪深金额", "沪深京金额", "换手率", "内盘", "外盘", "盘后成交量"].map((t) => (
                  <Tab key={t} $active={t === "成交量"}>{t}{t === "沪深金额" && <HotDot />}</Tab>
                ))}
              </Bar>
              <Bar $h={20}>
                <Readout $tone={SILVER}>MACD(12,26,9) </Readout>
                <Readout $tone={RED}>MACD: +1.44</Readout><Trend />
                <Readout $tone="#fff">DIFF: +1.52</Readout><Trend />
                <Readout $tone={YELLOW}>DEA: +0.797</Readout><Trend />
                <BoxButtons><BoxButton $w={60}>暗盘资金</BoxButton><BoxButton $w={66}>指标说明</BoxButton></BoxButtons>
              </Bar>
              <MacdChart />
            </Pane>
            <Scale $pitch={52} $top={37}><span>+7.15</span><span>+0</span></Scale>
          </Row>
          <Row><MonthAxis /></Row>

          <IndicatorBar>
            <Tab $pad={5}>设置</Tab>
            <Tab $pad={4}><NewTag>NEW</NewTag>指标广场</Tab>
            <Tab $pad={9}><Robot />新建</Tab>
            {["MACD", "KDJ", "RSI", "BOLL", "W&R", "DMI", "BIAS", "ASI", "VR", "ARBR", "DPO", "TRIX", "新DMA", "BBI", "MTM", "OBV", "SAR", "EXPMA指标"].map((t) => (
              <Tab key={t} $tight $active={t === "MACD"}>{t}</Tab>
            ))}
          </IndicatorBar>
          <NewsBar>
            {["个股新闻", "个股公告", "社区"].map((t) => <Tab key={t}>{t}</Tab>)}
            <TopButton aria-label="展开">
              <svg width="11" height="13" viewBox="0 0 11 13" fill="#d0d0d0"><path d="M0 0h11v2H0zM5.500 3 11 8.500H7.500V13h-4V8.500H0z" /></svg>
            </TopButton>
          </NewsBar>
        </Main>
      </WorkArea>

      <IndexBar>
        {indices.map((ix) => (
          <IndexGroup key={ix.name}>
            <IndexName>{ix.name}</IndexName>
            {ix.values.map((v) => <IndexValue key={v} $tone={ix.tone}>{v}</IndexValue>)}
            <IndexValue $tone="#00e6ff">{ix.amount}<Unit>亿</Unit></IndexValue>
          </IndexGroup>
        ))}
      </IndexBar>

      <StatusBar>
        {["手机端", "反馈", "日记", "测速", "行情", "7*24快讯", "盯盘"].map((t) => <Tab key={t} $pad={4}>{t}</Tab>)}
        <Tab $pad={9} aria-label="助手"><Robot /></Tab>
        <Ticker>
          <TickerItem href="#n1">反加沙停火协议</TickerItem>
          <TickerItem href="#n2">想炒股先开户，点击此处即刻前往</TickerItem>
          <TickerItem href="#n3">22:09 王毅同俄罗斯联邦安全会议秘书绍伊古进行战略沟通</TickerItem>
          <TickerItem href="#n4">21:39 华为云发布业界首个智慧病理</TickerItem>
        </Ticker>
        <Search>
          <SearchInput aria-label="代码/名称/简拼/功能" placeholder="代码/名称/简拼/功能" />
          <svg width="11" height="11" viewBox="0 0 11 11" fill="none" stroke="#555"><circle cx="4" cy="4" r="3" /><path d="m6.500 6.500 4 4" strokeWidth="2" /></svg>
        </Search>
        <Clock>23:47:31</Clock>
      </StatusBar>

      <Watermark aria-hidden="true">
        <svg width="58" height="58" viewBox="0 0 58 58" fill="none" stroke="rgba(205,205,205,0.85)" strokeWidth="6" strokeLinejoin="round">
          <path d="M19 5A26 26 0 1 1 13 8.500L25.500 21Q27.500 23 25.500 25L13 39M45 18 34 28.500Q32 30.500 34 33L44 46" />
        </svg>
        <MarkBrand>雪球</MarkBrand><MarkColon>：</MarkColon><span>戴维斯双击</span>
      </Watermark>
    </Page>
  );
}
